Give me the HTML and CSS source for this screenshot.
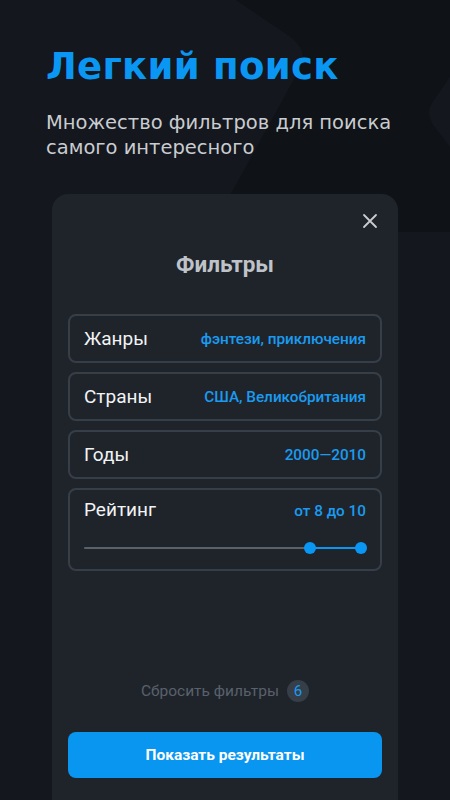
FILE: index.html
```html
<!DOCTYPE html>
<html lang="ru">
<head>
    <meta charset="UTF-8">
    <meta name="viewport" content="width=device-width, initial-scale=1.0">
    <title>Легкий поиск</title>
    <link rel="stylesheet" href="styles.css">
</head>
<body>
    <svg class="backdrop" width="450" height="800" viewBox="0 0 450 800">
        <path d="M236 0 L460 0 L460 62 L434 100 Q424 112 434 126 L460 160 L460 232 L210 232 L298 72 Q310 52 292 38 Z" fill="#0f1216"/>
    </svg>
    <div class="screen">
        <h1 class="title">Легкий поиск</h1>
        <p class="subtitle">Множество фильтров для поиска самого интересного</p>

        <div class="sheet">
            <button class="close">
                <svg width="16" height="16" viewBox="0 0 16 16">
                    <path d="M2 2 L14 14 M14 2 L2 14" stroke="#c9ccd1" stroke-width="1.8" stroke-linecap="round"/>
                </svg>
            </button>
            <h2 class="sheet-title">Фильтры</h2>

            <div class="filters">
                <div class="filter">
                    <span class="filter-name">Жанры</span>
                    <span class="filter-value">фэнтези, приключения</span>
                </div>
                <div class="filter">
                    <span class="filter-name">Страны</span>
                    <span class="filter-value">США, Великобритания</span>
                </div>
                <div class="filter">
                    <span class="filter-name">Годы</span>
                    <span class="filter-value">2000—2010</span>
                </div>
                <div class="filter filter-range">
                    <div class="range-head">
                        <span class="filter-name">Рейтинг</span>
                        <span class="filter-value">от 8 до 10</span>
                    </div>
                    <div class="slider">
                        <div class="slider-active" style="left: 81.6%; right: 0;"></div>
                        <span class="thumb" style="left: 81.6%;"></span>
                        <span class="thumb" style="left: 100%;"></span>
                    </div>
                </div>
            </div>

            <div class="reset">
                <span>Сбросить фильтры</span>
                <span class="badge">6</span>
            </div>

            <button class="show">Показать результаты</button>
        </div>
    </div>
</body>
</html>
```

FILE: styles.css
```css
body {
    margin: 0;
    background: #14171d;
    font-family: Roboto, "Noto Sans", sans-serif;
    overflow: hidden;
}
.backdrop {
    position: absolute;
    top: 0;
    left: 0;
}
.screen {
    position: relative;
    height: 800px;
    padding: 0 0 0 46px;
    box-sizing: border-box;
}
.title {
    margin: 0;
    padding-top: 43px;
    font-family: "DejaVu Sans", sans-serif;
    font-weight: bold;
    font-size: 37px;
    line-height: 48px;
    letter-spacing: 0.3px;
    color: #0a97f3;
}
.subtitle {
    margin: 19px 0 0;
    width: 380px;
    font-family: "DejaVu Sans", sans-serif;
    font-size: 19.5px;
    line-height: 25px;
    color: #c9ccd0;
}
.sheet {
    position: relative;
    margin: 34px 0 0 6px;
    width: 346px;
    height: 620px;
    box-sizing: border-box;
    padding: 0 16px;
    background: #1f242b;
    border-radius: 16px 16px 0 0;
}
.close {
    position: absolute;
    top: 19px;
    right: 20px;
    background: transparent;
    border: none;
    padding: 0;
    width: 16px;
    height: 16px;
    cursor: pointer;
}
.sheet-title {
    margin: 0;
    padding-top: 56px;
    text-align: center;
    font-size: 22.5px;
    line-height: 28px;
    font-weight: bold;
    color: #bfc3c9;
}
.filters {
    display: flex;
    flex-direction: column;
    gap: 9px;
    margin-top: 36px;
}
.filter {
    display: flex;
    justify-content: space-between;
    align-items: center;
    height: 49px;
    box-sizing: border-box;
    padding: 0 14px;
    border: 2px solid #363e48;
    border-radius: 8px;
}
.filter-name {
    font-size: 19px;
    color: #f2f3f5;
}
.filter-value {
    font-size: 15.3px;
    font-weight: 500;
    color: #1a9bf0;
}
.filter-range {
    display: block;
    height: 83px;
    padding-top: 8px;
}
.range-head {
    display: flex;
    justify-content: space-between;
    align-items: baseline;
}
.slider {
    position: relative;
    margin: 26px 5px 0 0;
    height: 2px;
    background: #59616b;
    border-radius: 1px;
}
.slider-active {
    position: absolute;
    top: 0;
    bottom: 0;
    background: #0a97f3;
}
.thumb {
    position: absolute;
    top: -5px;
    width: 12px;
    height: 12px;
    margin-left: -6px;
    border-radius: 50%;
    background: #0a97f3;
}
.reset {
    display: flex;
    justify-content: center;
    align-items: center;
    gap: 8px;
    margin-top: 109px;
    font-size: 15.5px;
    color: #59616b;
}
.badge {
    display: flex;
    align-items: center;
    justify-content: center;
    width: 22px;
    height: 22px;
    border-radius: 50%;
    background: #363e48;
    color: #1a9bf0;
    font-size: 15px;
}
.show {
    display: block;
    width: 100%;
    margin-top: 30px;
    height: 46px;
    border: none;
    border-radius: 8px;
    background: #0896f0;
    color: #ffffff;
    font-family: Roboto, sans-serif;
    font-weight: bold;
    font-size: 15.5px;
    cursor: pointer;
}
```
